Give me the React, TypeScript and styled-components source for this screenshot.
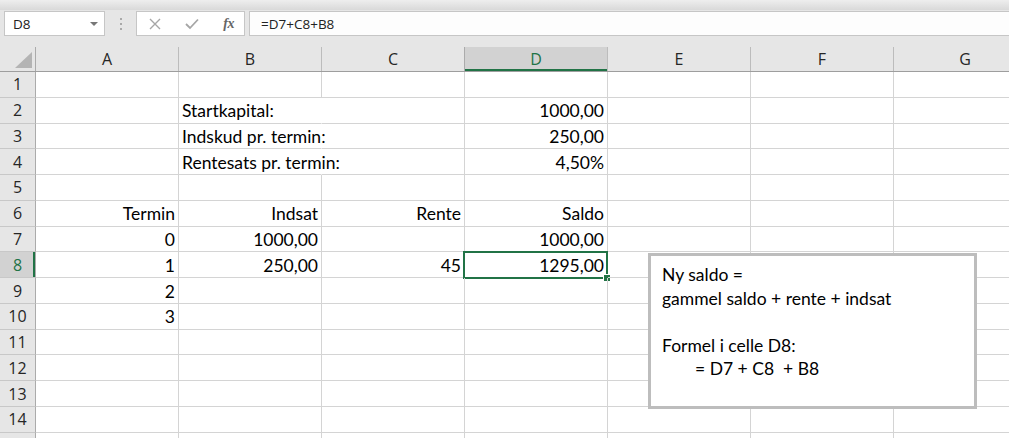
import React from 'react';
import styled, { createGlobalStyle, css } from 'styled-components';

const GREEN = '#217346';
const GRID = '#d4d4d4';
const COLS = ['A', 'B', 'C', 'D', 'E', 'F', 'G'];
const ROW_H = 25.77;

const GlobalStyle = createGlobalStyle`
  html, body {
    margin: 0;
    padding: 0;
    background: #ffffff;
    overflow: hidden;
  }
`;

const Window = styled.div`
  position: relative;
  width: 1009px;
  height: 438px;
  overflow: hidden;
  display: flex;
  flex-direction: column;
  background: #ffffff;
`;

const TopStrip = styled.div`
  height: 10px;
  flex: none;
  background: linear-gradient(#eeeeee, #d9d9d9);
`;

const FormulaBar = styled.div`
  height: 27px;
  flex: none;
  display: flex;
  align-items: flex-start;
  padding: 1px 0 0 4px;
  box-sizing: border-box;
  background: #e6e6e6;
`;

const Box = styled.div`
  height: 25px;
  box-sizing: border-box;
  background: #ffffff;
  border: 1px solid #c6c6c6;
  display: flex;
  align-items: center;
`;

const NameBox = styled(Box)`
  width: 101px;
  padding: 0 6px 0 8px;
  justify-content: space-between;
  font-family: 'Open Sans', 'Noto Sans', sans-serif;
  font-size: 13.5px;
  color: #222222;
`;

const Caret = styled.span`
  width: 0;
  height: 0;
  border-left: 4px solid transparent;
  border-right: 4px solid transparent;
  border-top: 4px solid #777777;
`;

const Grip = styled.div`
  width: 31px;
  height: 25px;
  display: flex;
  flex-direction: column;
  align-items: center;
  justify-content: center;
  gap: 3px;

  span {
    width: 2px;
    height: 2px;
    background: #a9a9a9;
  }
`;

const FxGroup = styled(Box)`
  width: 109px;
  padding: 0 10px 0 12px;
  justify-content: space-between;
`;

const FxLabel = styled.span`
  font-family: 'Liberation Serif', 'DejaVu Serif', serif;
  font-style: italic;
  font-weight: bold;
  font-size: 14px;
  color: #666666;
  letter-spacing: -0.5px;
`;

const FormulaInput = styled(Box)`
  flex: 1;
  margin-left: 4px;
  border-right: none;
  padding-left: 11px;
  font-family: 'Open Sans', 'Noto Sans', sans-serif;
  font-size: 13.5px;
  color: #222222;
  background: #fdfdfd;
`;

const Sheet = styled.div`
  position: relative;
  flex: 1;
  padding-top: 10px;
  background: linear-gradient(#e6e6e6 0, #e6e6e6 35px, #ffffff 35px);
`;

const HeaderRow = styled.div`
  display: flex;
  height: 25px;
  box-sizing: border-box;
  border-bottom: 1px solid #9e9e9e;
  background: #e6e6e6;
`;

const Corner = styled.div`
  width: 36px;
  flex: none;
  box-sizing: border-box;
  border-right: 1px solid #ababab;
  display: flex;
  align-items: flex-end;
  justify-content: flex-end;
  padding: 0 3px 3px 0;
`;

const ColHeader = styled.div<{ $active?: boolean }>`
  width: 143px;
  flex: none;
  box-sizing: border-box;
  border-right: 1px solid #bcbcbc;
  display: flex;
  align-items: center;
  justify-content: center;
  font-family: 'Open Sans', 'Noto Sans', sans-serif;
  font-size: 16px;
  color: #262626;
  ${({ $active }) =>
    $active &&
    css`
      background: #d2d2d2;
      color: ${GREEN};
      border-left: 1px solid #ababab;
      margin-left: -1px;
      width: 144px;
      box-shadow: inset 0 -2px 0 ${GREEN};
    `}
`;

const Row = styled.div`
  display: flex;
  height: ${ROW_H}px;
`;

const RowHeader = styled.div<{ $active?: boolean }>`
  width: 36px;
  flex: none;
  box-sizing: border-box;
  border-right: 1px solid #ababab;
  border-bottom: 1px solid #c8c8c8;
  background: ${({ $active }) => ($active ? '#d2d2d2' : '#e6e6e6')};
  color: ${({ $active }) => ($active ? GREEN : '#262626')};
  box-shadow: ${({ $active }) => ($active ? `inset -2px 0 0 ${GREEN}` : 'none')};
  display: flex;
  align-items: center;
  justify-content: center;
  font-family: 'Open Sans', 'Noto Sans', sans-serif;
  font-size: 16px;
`;

const Cell = styled.div<{ $align: 'left' | 'right'; $spill?: boolean }>`
  position: relative;
  width: 143px;
  flex: none;
  box-sizing: border-box;
  border-right: 1px solid ${({ $spill }) => ($spill ? 'transparent' : GRID)};
  border-bottom: 1px solid ${GRID};
  display: flex;
  align-items: center;
  justify-content: ${({ $align }) => ($align === 'left' ? 'flex-start' : 'flex-end')};
  padding: 1px 3px 0 3px;
  white-space: nowrap;
  font-family: 'Lato', 'Noto Sans', sans-serif;
  font-size: 17.5px;
  color: #000000;
  z-index: ${({ $spill }) => ($spill ? 1 : 0)};
`;

const Selection = styled.div`
  position: absolute;
  left: -2px;
  top: -1px;
  right: -1px;
  bottom: -2px;
  border: 2px solid ${GREEN};
  pointer-events: none;
`;

const FillHandle = styled.div`
  position: absolute;
  right: -5px;
  bottom: -5px;
  width: 6px;
  height: 6px;
  background: ${GREEN};
  border: 1px solid #ffffff;
`;

const Note = styled.div`
  position: absolute;
  left: 648px;
  top: 216px;
  width: 329px;
  height: 156px;
  box-sizing: border-box;
  border: 3px solid #bdbdbd;
  background: #ffffff;
  padding: 7px 11px;
  font-family: 'Lato', 'Noto Sans', sans-serif;
  font-size: 17.5px;
  line-height: 23.5px;
  color: #000000;
  z-index: 2;
`;

const NoteLine = styled.div<{ $indent?: number }>`
  min-height: 23.5px;
  padding-left: ${({ $indent }) => $indent ?? 0}px;
  white-space: pre;
`;

type CellData = { v: string; align?: 'left' | 'right' };
type RowData = Partial<Record<string, CellData>>;

const label = (v: string): CellData => ({ v, align: 'left' });
const num = (v: string): CellData => ({ v, align: 'right' });

const rows: RowData[] = [
  {},
  { B: label('Startkapital:'), D: num('1000,00') },
  { B: label('Indskud pr. termin:'), D: num('250,00') },
  { B: label('Rentesats pr. termin:'), D: num('4,50%') },
  {},
  { A: num('Termin'), B: num('Indsat'), C: num('Rente'), D: num('Saldo') },
  { A: num('0'), B: num('1000,00'), D: num('1000,00') },
  { A: num('1'), B: num('250,00'), C: num('45'), D: num('1295,00') },
  { A: num('2') },
  { A: num('3') },
  {},
  {},
  {},
  {},
  {},
];

const ACTIVE_ROW = 8;
const ACTIVE_COL = 'D';
const VISIBLE_LABELS = 14;

function XIcon() {
  return (
    <svg width="12" height="12" viewBox="0 0 12 12">
      <path d="M1 1 L11 11 M11 1 L1 11" stroke="#a6a6a6" strokeWidth="1.4" fill="none" />
    </svg>
  );
}

function CheckIcon() {
  return (
    <svg width="14" height="12" viewBox="0 0 14 12">
      <path d="M1 6 L5 10 L13 1.5" stroke="#a6a6a6" strokeWidth="1.8" fill="none" />
    </svg>
  );
}

function SelectAll() {
  return (
    <svg width="17" height="16" viewBox="0 0 17 16">
      <polygon points="17,0 17,16 0,16" fill="#b4b4b4" />
    </svg>
  );
}

export default function App() {
  return (
    <>
      <GlobalStyle />
      <Window>
        <TopStrip />
        <FormulaBar>
          <NameBox>
            D8
            <Caret />
          </NameBox>
          <Grip>
            <span />
            <span />
            <span />
          </Grip>
          <FxGroup>
            <XIcon />
            <CheckIcon />
            <FxLabel>fx</FxLabel>
          </FxGroup>
          <FormulaInput>=D7+C8+B8</FormulaInput>
        </FormulaBar>
        <Sheet>
          <HeaderRow>
            <Corner>
              <SelectAll />
            </Corner>
            {COLS.map((c) => (
              <ColHeader key={c} $active={c === ACTIVE_COL}>
                {c}
              </ColHeader>
            ))}
          </HeaderRow>
          {rows.map((row, i) => {
            const n = i + 1;
            return (
              <Row key={n}>
                {/* row 15 only peeks in at the bottom edge, its number is below the fold */}
                <RowHeader $active={n === ACTIVE_ROW}>{n <= VISIBLE_LABELS ? n : ''}</RowHeader>
                {COLS.map((c) => {
                  const cell = row[c];
                  const spill = cell?.align === 'left' && c === 'B';
                  const active = n === ACTIVE_ROW && c === ACTIVE_COL;
                  return (
                    <Cell key={c} $align={cell?.align ?? 'right'} $spill={spill}>
                      {cell?.v}
                      {active && (
                        <Selection>
                          <FillHandle />
                        </Selection>
                      )}
                    </Cell>
                  );
                })}
              </Row>
            );
          })}
          <Note>
            <NoteLine>Ny saldo =</NoteLine>
            <NoteLine>gammel saldo + rente + indsat</NoteLine>
            <NoteLine> </NoteLine>
            <NoteLine>Formel i celle D8:</NoteLine>
            <NoteLine $indent={33}>= D7 + C8  + B8</NoteLine>
          </Note>
        </Sheet>
      </Window>
    </>
  );
}
